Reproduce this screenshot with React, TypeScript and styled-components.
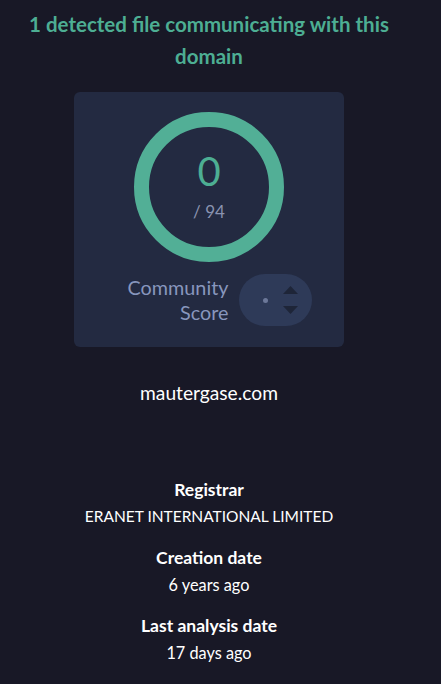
import React from "react";
import styled, { createGlobalStyle } from "styled-components";

const Global = createGlobalStyle`
  html, body { margin: 0; padding: 0; background: #181826; }
  body { font-family: "Lato", "Noto Sans", sans-serif; color: #fff; }
`;

const Page = styled.div`
  width: 418px;
  display: flex;
  flex-direction: column;
  align-items: center;
  padding-top: 8px;
`;

const Title = styled.h1`
  margin: 0;
  width: 380px;
  text-align: center;
  color: #4dae93;
  font-size: 20.5px;
  font-weight: 700;
  line-height: 32px;
`;

const Card = styled.div`
  margin-top: 20px;
  width: 270px;
  height: 255px;
  box-sizing: border-box;
  background: #232a41;
  border-radius: 6px;
  display: flex;
  flex-direction: column;
  align-items: center;
  padding-top: 20px;
`;

const Gauge = styled.div`
  position: relative;
  width: 150px;
  height: 150px;
`;

const GaugeText = styled.div`
  position: absolute;
  inset: 0;
  display: flex;
  flex-direction: column;
  align-items: center;
  padding-top: 37px;
`;

const Score = styled.div`
  color: #4dae93;
  font-size: 40px;
  line-height: 44px;
`;

const Total = styled.div`
  color: #8a93b0;
  font-size: 17px;
  line-height: 22px;
  margin-top: 8px;
`;

const CommunityRow = styled.div`
  margin-top: 12px;
  display: flex;
  align-items: center;
  gap: 11px;
  margin-left: 22px;
`;

const CommunityLabel = styled.div`
  text-align: right;
  color: #8896bd;
  font-size: 19.8px;
  line-height: 25px;
`;

const Pill = styled.div`
  width: 73px;
  height: 52px;
  border-radius: 26px;
  background: #2e3a58;
  display: flex;
  align-items: center;
  justify-content: space-between;
  padding: 0 14px 0 24px;
  box-sizing: border-box;
`;

const Dot = styled.span`
  width: 5px;
  height: 5px;
  border-radius: 50%;
  background: #6c7899;
`;

const Arrows = styled.div`
  display: flex;
  flex-direction: column;
  gap: 12px;
  svg { display: block; }
`;

const Domain = styled.div`
  margin-top: 34px;
  font-size: 19.2px;
  line-height: 24px;
  color: #fff;
`;

const Info = styled.div`
  margin-top: 72px;
  display: flex;
  flex-direction: column;
  align-items: center;
  gap: 15px;
`;

const Field = styled.div`
  display: flex;
  flex-direction: column;
  align-items: center;
`;

const Label = styled.div`
  font-weight: 700;
  font-size: 17.5px;
  line-height: 26px;
`;

const Value = styled.div`
  font-size: 15.5px;
  line-height: 27px;
`;

const LowerValue = styled(Value)`
  font-size: 16.3px;
`;

export default function App() {
  return (
    <>
      <Global />
      <Page>
        <Title>1 detected file communicating with this domain</Title>
        <Card>
          <Gauge>
            <svg width="150" height="150" viewBox="0 0 150 150">
              <circle cx="75" cy="75" r="67.5" fill="none" stroke="#52af96" strokeWidth="15" />
            </svg>
            <GaugeText>
              <Score>0</Score>
              <Total>/ 94</Total>
            </GaugeText>
          </Gauge>
          <CommunityRow>
            <CommunityLabel>
              Community
              <br />
              Score
            </CommunityLabel>
            <Pill>
              <Dot />
              <Arrows>
                <svg width="15" height="8" viewBox="0 0 15 8">
                  <polygon points="7.5,0 15,8 0,8" fill="#1e2538" />
                </svg>
                <svg width="15" height="8" viewBox="0 0 15 8">
                  <polygon points="0,0 15,0 7.5,8" fill="#1e2538" />
                </svg>
              </Arrows>
            </Pill>
          </CommunityRow>
        </Card>
        <Domain>mautergase.com</Domain>
        <Info>
          <Field>
            <Label>Registrar</Label>
            <Value>ERANET INTERNATIONAL LIMITED</Value>
          </Field>
          <Field>
            <Label>Creation date</Label>
            <LowerValue>6 years ago</LowerValue>
          </Field>
          <Field>
            <Label>Last analysis date</Label>
            <LowerValue>17 days ago</LowerValue>
          </Field>
        </Info>
      </Page>
    </>
  );
}
